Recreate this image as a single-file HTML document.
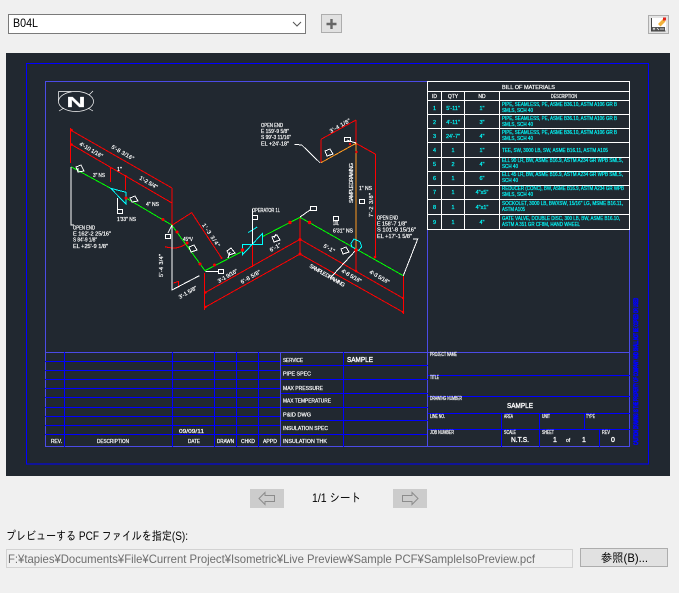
<!DOCTYPE html>
<html><head><meta charset="utf-8"><style>
html,body{margin:0;padding:0;background:#f0f0f0;width:679px;height:593px;overflow:hidden}
svg{display:block}
text{font-family:"Liberation Sans",sans-serif}
.j{font-family:"Liberation Sans","IPAGothic","Noto Sans CJK JP",sans-serif;font-size:12px;fill:#000}
.w{fill:#fff;stroke:#fff;stroke-width:.2;font-size:5.5px}
.s{fill:#fff;stroke:#fff;stroke-width:.2;font-size:5px}
.h{fill:#fff;stroke:#fff;stroke-width:.35;font-size:7px}
.c{fill:#0ff;stroke:#0ff;stroke-width:.2;font-size:5.5px}
.m{text-anchor:middle}
</style></head><body>
<svg width="679" height="593" viewBox="0 0 679 593" xmlns="http://www.w3.org/2000/svg">
<!-- top controls -->
<rect x="8.500" y="14.500" width="297" height="19" fill="#fff" stroke="#7a7a7a"/>
<text x="13" y="27" class="j" textLength="25" lengthAdjust="spacingAndGlyphs">B04L</text>
<path d="M293 22l4 4 4-4" fill="none" stroke="#555" stroke-width="1"/>
<rect x="321.500" y="14.500" width="20" height="18" fill="#e1e1e1" stroke="#adadad"/>
<path d="M331.500 19v10M326.500 24h10" stroke="#666" stroke-width="2.400"/>
<rect x="648.500" y="15.500" width="20" height="18" fill="#e4e4e4" stroke="#adadad"/>
<rect x="651" y="18" width="15" height="13" fill="#fff"/>
<path d="M651.500 18v13h14" fill="none" stroke="#444"/>
<path d="M652 27h13v3.500h-13z" fill="#555"/>
<path d="M653 28l2 2M655 28l-2 2M657 28l2 2M661 28v2M663 28v2" stroke="#fff" stroke-width=".7"/>
<path d="M658 24l5-5 2.500 2.500-5 5z" fill="#f2b13c"/>
<rect x="663" y="17.500" width="3" height="3" fill="#e2231a"/>

<!-- drawing panel -->
<rect x="6" y="53" width="664" height="423" fill="#212830"/>
<g shape-rendering="crispEdges" fill="none">
<rect x="26.500" y="63.500" width="622" height="400.500" stroke="#0000ff"/>
<rect x="45.500" y="81.500" width="584" height="365" stroke="#4b4be6"/>
<path d="M427.500 229v218M45 352.500h585" stroke="#4b4be6"/>
<!-- BOM -->
<path d="M427.500 81.500h202M427.500 91.500h202M427.500 100.500h202M427.500 114.500h202M427.500 128.500h202M427.500 142.500h202M427.500 157.500h202M427.500 171.500h202M427.500 185.500h202M427.500 199.500h202M427.500 214.500h202M427.500 229.500h202M427.500 81v149M629.500 81v149M441.500 91v139M464.500 91v139M499.500 91v139" stroke="#fff"/>
<!-- title left -->
<path d="M45 361.500h236M45 370.500h236M45 379.500h236M45 388.500h236M45 397.500h236M45 407.500h236M45 416.500h236M45 425.500h236M45 434.500h236M64.500 352v95M172.500 352v95M214.500 352v95M236.500 352v95M258.500 352v95" stroke="#0000ff"/>
<path d="M281 434.500h146" stroke="#0000ff"/>
<path d="M280.500 352v95" stroke="#4b4be6"/>
<path d="M281 365.500h147M281 379.500h147M281 393.500h147M281 407.500h147M281 420.500h147M343.500 352v95" stroke="#0000ff"/>
<path d="M428 375.500h202M428 396.500h202M428 413.500h202M428 429.500h202M501.500 413v34M539.500 413v34M584.500 413v16M599.500 429v18" stroke="#0000ff"/>
</g>
<!-- vertical blue text -->
<text transform="translate(638,445) rotate(-90)" fill="#0000ff" stroke="#0000ff" stroke-width=".8" font-size="6" textLength="147" lengthAdjust="spacingAndGlyphs">CAUTION DRAWING IS THE PROPERTY OF COMPANY AND SHALL NOT BE COPIED OR USED</text>

<!-- north -->
<g fill="none" stroke="#fff" stroke-width=".7">
<ellipse cx="76" cy="101.500" rx="17.500" ry="10"/>
<path d="M58.500 91.500h13M58.500 91.500v9M59 111l5-3M93 91l-4 4M93 111l-5-3"/>
</g>
<text x="76" y="107" class="m" fill="#fff" stroke="#fff" stroke-width=".2" font-size="15" font-weight="bold" textLength="19" lengthAdjust="spacingAndGlyphs">N</text>

<!-- iso drawing -->
<g shape-rendering="crispEdges">
<g fill="none" stroke="#ff0000" stroke-width="1">
<path d="M70.500 128v35M70.500 130L172 188M70.500 144L172 203M172 188v37M110.700 167v15M125.700 175v15"/>
<path d="M172.300 225l19.400-12.300 30 45.600"/>
<path d="M165 246.700c3 1 10 2 14 .5 4-1 7-3 9-5.500"/>
<path d="M173.500 283l5-1.500v6"/>
<path d="M204.500 273v37M205 292.700L300 239.300M205 307.300L300 254M300 217.300V254M300 239.300L403.300 298.300M300 254L403.300 312.300M403.300 275.700V314"/>
<path d="M252.300 244v23"/>
<path d="M356 120v23M356 250v22M321 139.300v23.400M321 139.300L356 120M356 143.300l19.700 11M375.700 154v104"/>
</g>
<g fill="none" stroke="#00ff00" stroke-width="1">
<path d="M71 166.700l39.700 21.600M126 198l45.700 27L205 270.700L241.700 251.700M262.300 236.700L300 217.300L403.300 275.700"/>
</g>
<path d="M321 162.700L356 143.300V250" fill="none" stroke="#ff9a1f" stroke-width="1"/>
<g fill="none" stroke="#00ffff" stroke-width="1">
<path d="M110.700 188.300l15.300 4v11.700zM126 192.300v11.700"/>
<path d="M242.300 244.500H262.300V233.500L242.300 255zM248.300 232.500l9-5.500"/>
<path d="M354 239l6 2.700 1.700 5-3.300 4-6.700-4-.7-3.400z"/>
</g>
<g fill="none" stroke="#fff" stroke-width="1">
<path d="M71 167V225h3M172 225v65l27.300-14.300M172 225l-4 8M205.700 271.700h12.600"/>
<path d="M252.300 209v35M294.300 144.300l7.400.7L320 162.700M346.700 140l9.300 3M300 217l10-7M403.300 275.700L417.700 239H413M356 250l-26 28.300"/>
<path d="M78 172v-4M117.700 198v11M228 258l2-6M274 238l2-4"/>
</g>
<g fill="none" stroke="#fff" stroke-width="1">
<rect x="117.500" y="209.500" width="5" height="4"/>
<rect x="165.500" y="234.500" width="5" height="4"/>
<rect x="218.500" y="269.500" width="5" height="4"/>
<rect x="252.500" y="215.500" width="5" height="4"/>
<rect x="344.500" y="137.500" width="6" height="4"/>
<rect x="310.500" y="206.500" width="6" height="4"/>
<rect x="359.500" y="199.500" width="5" height="4"/>
<rect x="333.500" y="216.500" width="5" height="4"/>
<path d="M81 165l3 6-6 1-2-5z"/><path d="M135 196l3 5-6 1-2-4z"/><path d="M194 245l3 5-6 2-2-5z"/>
<path d="M231 248l4 5-6 2-2-4z"/><path d="M277 235l3 5-6 2-2-5z"/><path d="M330 149l3 5-6 2-2-5z"/>
<path d="M346 247l3 5-6 2-2-5z"/>
</g>
</g>
<g fill="#ff0000">
<circle cx="71.500" cy="130" r="1.300"/><circle cx="71.500" cy="144.500" r="1.300"/>
<circle cx="110.700" cy="168" r="1"/><circle cx="125.700" cy="176" r="1"/><circle cx="126" cy="198" r="1.500"/>
<circle cx="163" cy="219.500" r="1.500"/><circle cx="177" cy="232" r="1.500"/><circle cx="187" cy="243" r="1.500"/><circle cx="200" cy="264" r="1.500"/>
<circle cx="214.500" cy="265" r="1.500"/><circle cx="221.500" cy="258" r="1"/>
<circle cx="242.500" cy="250" r="1.700"/><circle cx="290" cy="222.500" r="1.700"/><circle cx="309.500" cy="222.500" r="1.700"/>
<circle cx="300" cy="239.500" r="1.500"/><circle cx="300" cy="254" r="1.500"/><circle cx="356" cy="250" r="1.800"/>
<circle cx="350" cy="144" r="1.200"/><circle cx="356.500" cy="152" r="1.200"/><circle cx="375" cy="257" r="1.300"/>
<circle cx="205.500" cy="292.500" r="1.200"/><circle cx="205.500" cy="307" r="1.200"/><circle cx="403" cy="298" r="1.200"/><circle cx="403" cy="312" r="1.200"/>
<circle cx="356" cy="271" r="1.300"/>
</g>
<g>
<text class="w" x="73" y="229.500" textLength="22" lengthAdjust="spacingAndGlyphs">OPEN END</text>
<text class="w" x="73" y="235.500" textLength="38" lengthAdjust="spacingAndGlyphs">E 162'-2 25/16"</text>
<text class="w" x="73" y="241.500" textLength="24" lengthAdjust="spacingAndGlyphs">S 84'-9 1/8"</text>
<text class="w" x="73" y="248" textLength="35" lengthAdjust="spacingAndGlyphs">EL +25'-9 1/8"</text>
<text class="w" x="117" y="221" textLength="19" lengthAdjust="spacingAndGlyphs">1'33" NS</text>
<text class="w" x="261" y="127" textLength="22" lengthAdjust="spacingAndGlyphs">OPEN END</text>
<text class="w" x="261" y="133" textLength="28" lengthAdjust="spacingAndGlyphs">E 159'-9 5/8"</text>
<text class="w" x="261" y="139" textLength="30" lengthAdjust="spacingAndGlyphs">S 99'-3 11/16"</text>
<text class="w" x="261" y="145.500" textLength="28" lengthAdjust="spacingAndGlyphs">EL +24'-18"</text>
<text class="w" x="377" y="219.500" textLength="21" lengthAdjust="spacingAndGlyphs">OPEN END</text>
<text class="w" x="377" y="225.500" textLength="30" lengthAdjust="spacingAndGlyphs">E 158'-7 1/8"</text>
<text class="w" x="377" y="231.500" textLength="39" lengthAdjust="spacingAndGlyphs">S 101'-8 15/16"</text>
<text class="w" x="377" y="238" textLength="35" lengthAdjust="spacingAndGlyphs">EL +17'-1 5/8"</text>
<text class="w" x="252" y="212" textLength="28" lengthAdjust="spacingAndGlyphs">OPERATOR 1L</text>
<text class="w" x="333" y="225" textLength="6" lengthAdjust="spacingAndGlyphs">10L</text>
<text class="w" x="333" y="232.500" textLength="20" lengthAdjust="spacingAndGlyphs">6'31" NS</text>
<text class="w" x="359" y="190" textLength="13" lengthAdjust="spacingAndGlyphs">1" NS</text>
<text class="w" x="93" y="177" textLength="12" lengthAdjust="spacingAndGlyphs">3" NS</text>
<text class="w" x="117" y="171">1"</text>
<text class="w" x="146" y="206" textLength="13" lengthAdjust="spacingAndGlyphs">4" NS</text>
<text class="w" x="183" y="241" textLength="10" lengthAdjust="spacingAndGlyphs">45°V</text>
<text class="w" transform="translate(79,145) rotate(30)" textLength="26" lengthAdjust="spacing">4'-10 1/16"</text>
<text class="w" transform="translate(111,148) rotate(30)" textLength="25" lengthAdjust="spacing">5'-8 3/16"</text>
<text class="w" transform="translate(139,179) rotate(30)" textLength="20" lengthAdjust="spacing">1'-2 5/4"</text>
<text class="w" transform="translate(202,225) rotate(56)" textLength="27" lengthAdjust="spacing">1'-3 3/4"</text>
<text class="w" transform="translate(163,277) rotate(-90)" textLength="23" lengthAdjust="spacing">5'-4 3/4"</text>
<text class="w" transform="translate(180,299) rotate(-30)" textLength="20" lengthAdjust="spacing">3'-1 5/8"</text>
<text class="w" transform="translate(219,283) rotate(-30)" textLength="22" lengthAdjust="spacing">3'-1 9/16"</text>
<text class="w" transform="translate(242,284) rotate(-30)" textLength="22" lengthAdjust="spacing">6'-8 5/8"</text>
<text class="w" transform="translate(271,252) rotate(-30)" textLength="12" lengthAdjust="spacing">6'-1"</text>
<text class="w" transform="translate(323,247) rotate(30)" textLength="12" lengthAdjust="spacing">5'-1"</text>
<text class="w" transform="translate(341,272) rotate(30)" textLength="22" lengthAdjust="spacing">4'-8 5/16"</text>
<text class="w" transform="translate(369,273) rotate(30)" textLength="22" lengthAdjust="spacing">4'-3 5/16"</text>
<text class="w" transform="translate(309,267) rotate(30)" textLength="40" lengthAdjust="spacing">SAMPLE DRAWING</text>
<text class="w" transform="translate(331,133) rotate(-30)" textLength="23" lengthAdjust="spacing">3'-4 1/8"</text>
<text class="w" transform="translate(353,203) rotate(-90)" textLength="40" lengthAdjust="spacing">SAMPLE DRAWING</text>
<text class="w" transform="translate(373,217) rotate(-90)" textLength="24" lengthAdjust="spacing">7'-2 3/8"</text>
</g>

<!-- BOM text -->
<text x="528.500" y="89" class="w m" textLength="53" lengthAdjust="spacingAndGlyphs">BILL OF MATERIALS</text>
<g>
<text class="s m" x="434.500" y="98">ID</text><text class="s m" x="453" y="98">QTY</text><text class="s m" x="482" y="98">ND</text><text class="s m" x="564" y="98" textLength="26" lengthAdjust="spacingAndGlyphs">DESCRIPTION</text>
</g>
<g>
<text class="c m" x="434.500" y="110">1</text><text class="c m" x="453" y="110">5'-11"</text><text class="c m" x="482" y="110">1"</text>
<text class="c" x="502" y="106" textLength="115" lengthAdjust="spacingAndGlyphs">PIPE, SEAMLESS, PE, ASME B36.10, ASTM A106 GR B</text><text class="c" x="502" y="112" textLength="31" lengthAdjust="spacingAndGlyphs">SMLS, SCH 40</text>
<text class="c m" x="434.500" y="124">2</text><text class="c m" x="453" y="124">4'-11"</text><text class="c m" x="482" y="124">3"</text>
<text class="c" x="502" y="120" textLength="115" lengthAdjust="spacingAndGlyphs">PIPE, SEAMLESS, PE, ASME B36.10, ASTM A106 GR B</text><text class="c" x="502" y="126" textLength="31" lengthAdjust="spacingAndGlyphs">SMLS, SCH 40</text>
<text class="c m" x="434.500" y="138">3</text><text class="c m" x="453" y="138">24'-7"</text><text class="c m" x="482" y="138">4"</text>
<text class="c" x="502" y="134" textLength="115" lengthAdjust="spacingAndGlyphs">PIPE, SEAMLESS, PE, ASME B36.10, ASTM A106 GR B</text><text class="c" x="502" y="140" textLength="31" lengthAdjust="spacingAndGlyphs">SMLS, SCH 40</text>
<text class="c m" x="434.500" y="152">4</text><text class="c m" x="453" y="152">1</text><text class="c m" x="482" y="152">1"</text>
<text class="c" x="502" y="152" textLength="106" lengthAdjust="spacingAndGlyphs">TEE, SW, 3000 LB, SW, ASME B16.11, ASTM A105</text>
<text class="c m" x="434.500" y="166">5</text><text class="c m" x="453" y="166">2</text><text class="c m" x="482" y="166">4"</text>
<text class="c" x="502" y="162" textLength="121" lengthAdjust="spacingAndGlyphs">ELL 90 LR, BW, ASME B16.9, ASTM A234 GR WPB SMLS,</text><text class="c" x="502" y="168" textLength="16" lengthAdjust="spacingAndGlyphs">SCH 40</text>
<text class="c m" x="434.500" y="180">6</text><text class="c m" x="453" y="180">1</text><text class="c m" x="482" y="180">6"</text>
<text class="c" x="502" y="176" textLength="121" lengthAdjust="spacingAndGlyphs">ELL 45 LR, BW, ASME B16.9, ASTM A234 GR WPB SMLS,</text><text class="c" x="502" y="182" textLength="16" lengthAdjust="spacingAndGlyphs">SCH 40</text>
<text class="c m" x="434.500" y="194">7</text><text class="c m" x="453" y="194">1</text><text class="c m" x="482" y="194">4"x5"</text>
<text class="c" x="502" y="190" textLength="122" lengthAdjust="spacingAndGlyphs">REDUCER (CONC), BW, ASME B16.9, ASTM A234 GR WPB</text><text class="c" x="502" y="196" textLength="31" lengthAdjust="spacingAndGlyphs">SMLS, SCH 40</text>
<text class="c m" x="434.500" y="209">8</text><text class="c m" x="453" y="209">1</text><text class="c m" x="482" y="209">4"x1"</text>
<text class="c" x="502" y="205" textLength="121" lengthAdjust="spacingAndGlyphs">SOCKOLET, 3000 LB, BWXSW, 15/16" LG, MSME B16.11,</text><text class="c" x="502" y="211" textLength="23" lengthAdjust="spacingAndGlyphs">ASTM A105</text>
<text class="c m" x="434.500" y="224">9</text><text class="c m" x="453" y="224">1</text><text class="c m" x="482" y="224">4"</text>
<text class="c" x="502" y="220" textLength="118" lengthAdjust="spacingAndGlyphs">GATE VALVE, DOUBLE DISC, 300 LB, BW, ASME B16.10,</text><text class="c" x="502" y="226" textLength="78" lengthAdjust="spacingAndGlyphs">ASTM A 351 GR CF8M, HAND WHEEL</text>
</g>

<!-- title block text -->
<g>
<text class="s" x="283" y="362" textLength="20" lengthAdjust="spacingAndGlyphs">SERVICE</text>
<text class="s" x="283" y="375.500" textLength="28" lengthAdjust="spacingAndGlyphs">PIPE SPEC</text>
<text class="s" x="283" y="390" textLength="40" lengthAdjust="spacingAndGlyphs">MAX PRESSURE</text>
<text class="s" x="283" y="402.500" textLength="48" lengthAdjust="spacingAndGlyphs">MAX TEMPERATURE</text>
<text class="s" x="283" y="416.500" textLength="28" lengthAdjust="spacingAndGlyphs">P&amp;ID DWG</text>
<text class="s" x="283" y="430" textLength="45" lengthAdjust="spacingAndGlyphs">INSULATION SPEC</text>
<text class="s" x="283" y="443" textLength="44" lengthAdjust="spacingAndGlyphs">INSULATION THK</text>
<text class="s" x="51" y="443" textLength="11" lengthAdjust="spacingAndGlyphs">REV.</text>
<text class="s" x="97" y="443" textLength="32" lengthAdjust="spacingAndGlyphs">DESCRIPTION</text>
<text class="s" x="188" y="443" textLength="12" lengthAdjust="spacingAndGlyphs">DATE</text>
<text class="s" x="217" y="443" textLength="17" lengthAdjust="spacingAndGlyphs">DRAWN</text>
<text class="s" x="241" y="443" textLength="14" lengthAdjust="spacingAndGlyphs">CHKD</text>
<text class="s" x="263" y="443" textLength="14" lengthAdjust="spacingAndGlyphs">APPD</text>
<text class="s" x="430" y="356" textLength="27" lengthAdjust="spacingAndGlyphs">PROJECT NAME</text>
<text class="s" x="430" y="379" textLength="9" lengthAdjust="spacingAndGlyphs">TITLE</text>
<text class="s" x="430" y="400" textLength="32" lengthAdjust="spacingAndGlyphs">DRAWING NUMBER</text>
<text class="s" x="430" y="418" textLength="15" lengthAdjust="spacingAndGlyphs">LINE NO.</text>
<text class="s" x="504" y="418" textLength="9" lengthAdjust="spacingAndGlyphs">AREA</text>
<text class="s" x="542" y="418" textLength="8" lengthAdjust="spacingAndGlyphs">UNIT</text>
<text class="s" x="586" y="418" textLength="9" lengthAdjust="spacingAndGlyphs">TYPE</text>
<text class="s" x="430" y="434" textLength="24" lengthAdjust="spacingAndGlyphs">JOB NUMBER</text>
<text class="s" x="504" y="434" textLength="12" lengthAdjust="spacingAndGlyphs">SCALE</text>
<text class="s" x="542" y="434" textLength="12" lengthAdjust="spacingAndGlyphs">SHEET</text>
<text class="s" x="602" y="434" textLength="8" lengthAdjust="spacingAndGlyphs">REV</text>
</g>
<text x="179" y="433" class="w" textLength="25" lengthAdjust="spacingAndGlyphs">09/09/11</text>
<text x="347" y="362" class="h" textLength="26" lengthAdjust="spacingAndGlyphs">SAMPLE</text>
<text x="507" y="408" class="h" textLength="26" lengthAdjust="spacingAndGlyphs">SAMPLE</text>
<text x="511" y="442" class="h" textLength="18" lengthAdjust="spacingAndGlyphs">N.T.S.</text>
<text x="553" y="442" class="h">1</text><text x="566" y="442" class="s">of</text><text x="582" y="442" class="h">1</text><text x="611" y="442" class="h">0</text>

<!-- pager -->
<rect x="250" y="489" width="34" height="19" fill="#cccccc"/>
<rect x="393" y="489" width="34" height="19" fill="#cccccc"/>
<path d="M259 498.500l6-6v3h9.500v6H265v3z" fill="#ccc" stroke="#8c8c8c" stroke-width="1"/>
<path d="M418 498.500l-6-6v3h-9.500v6h9.500v3z" fill="#ccc" stroke="#8c8c8c" stroke-width="1"/>
<text x="312" y="502" class="j" textLength="49" lengthAdjust="spacingAndGlyphs">1/1 シート</text>

<!-- file row -->
<text x="6" y="540" class="j" textLength="182" lengthAdjust="spacingAndGlyphs">プレビューする PCF ファイルを指定(S):</text>
<rect x="6.500" y="549.500" width="566" height="18" fill="#f0f0f0" stroke="#d2d2d2"/>
<text x="8" y="563" class="j" style="fill:#6d6d6d" textLength="527" lengthAdjust="spacingAndGlyphs">F:¥tapies¥Documents¥File¥Current Project¥Isometric¥Live Preview¥Sample PCF¥SampleIsoPreview.pcf</text>
<rect x="580.500" y="548.500" width="87" height="18" fill="#e1e1e1" stroke="#adadad"/>
<text x="601" y="562" class="j" textLength="47" lengthAdjust="spacingAndGlyphs">参照(B)...</text>
</svg>
</body></html>
